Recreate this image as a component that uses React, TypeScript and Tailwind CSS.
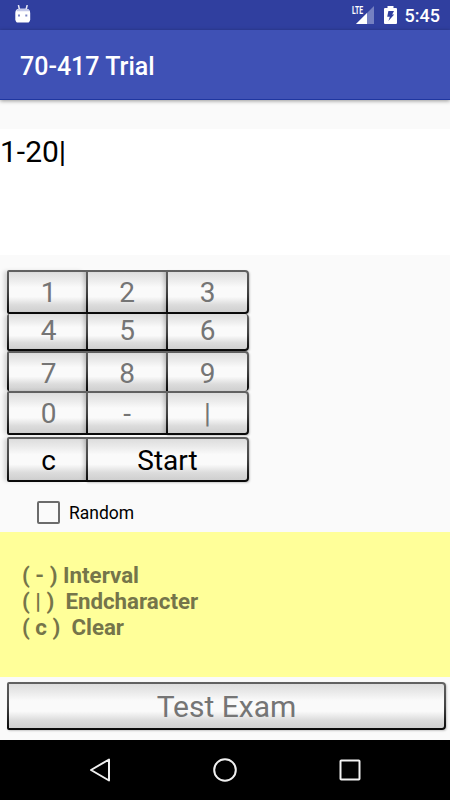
import { useState } from 'react';

type KeyProps = {
  label: string;
  width: string;
  edge?: string;
  face?: string;
  text?: string;
  first?: boolean;
  last?: boolean;
  onClick?: () => void;
};

// Bevelled key: the dark gradient is the frame, the inner span is the face
function Key({ label, width, edge = 'pt-[2px] pb-[2px]', face = '', text = 'text-[#757575] text-[28px]', first, last, onClick }: KeyProps) {
  return (
    <button
      onClick={onClick}
      className={`block h-full shrink-0 pl-[2px] bg-linear-to-b from-[#626262] via-[#444444] to-[#080808] ${edge} ${width} ${first ? 'rounded-l-[2px] shadow-[-4px_0_4px_-1px_rgba(0,0,0,0.15)]' : ''} ${last ? 'pr-[2px] rounded-r-[4px] shadow-[1px_1px_2px_rgba(0,0,0,0.2)]' : ''}`}
    >
      <span
        className={`flex h-full w-full items-center justify-center whitespace-pre leading-none bg-[linear-gradient(to_bottom,#dddddd_0%,#e8e8e8_16%,#fafafa_38%,#fafafa_62%,#dcdcdc_82%,#cfcfcf_100%)] ${text} ${last ? 'rounded-r-[2px]' : 'shadow-[inset_-5px_0_4px_-3px_rgba(0,0,0,0.2)]'}`}
      >
        <span className={face}>{label}</span>
      </span>
    </button>
  );
}

const rows = [
  { keys: ['1', '2', '3'], height: 'h-[44px]', edge: 'pt-[2px] pb-[2px]', face: 'translate-y-[1px]' },
  { keys: ['4', '5', '6'], height: 'h-[37px]', edge: 'pb-[2px]', face: '-translate-y-px' },
  { keys: ['7', '8', '9'], height: 'h-[40px]', edge: 'pt-[2px]', face: 'translate-y-[2px]' },
  { keys: ['0', '-', '|'], height: 'h-[44px]', edge: 'pt-[2px] pb-[2px]', face: 'translate-y-[1px]' },
];

const widths = ['w-[79px]', 'w-[80px]', 'w-[83px]'];

export default function App() {
  const [value, setValue] = useState('1-20|');
  const [random, setRandom] = useState(false);

  return (
    <div className="flex h-[800px] w-[450px] flex-col overflow-hidden bg-[#fafafa] font-['Roboto',sans-serif] text-black">
      {/* Status bar */}
      <div className="flex h-[30px] shrink-0 items-center bg-[#303f9f] pl-[15px] pr-[10px] text-white">
        <svg className="mt-[-3px] h-[18px] w-[16px]" viewBox="0 0 16 18" fill="none">
          <path d="M3.4 0L4.6 5M12.2 0L11 5" stroke="#e8eaf6" strokeWidth="1.5" />
          <path d="M0.3 8Q0.5 3.8 4.5 3.8H11Q15 3.8 15.2 8V14.5Q14.8 17.6 12.6 17.6H2.9Q0.7 17.6 0.3 14.5Z" fill="#fff" />
          <path d="M1.6 5Q2.8 3.8 4.5 3.8H11Q12.8 3.8 14 5V6.2H1.6Z" fill="#c5cae9" />
          <path d="M3 9.5h2v2H3zM10.3 9.5h2v2h-2z" fill="#7c86c4" />
        </svg>
        <svg className="ml-auto h-[20px] w-[24px]" viewBox="0 0 24 20">
          <path d="M24 1V19H6Z" fill="#7580c1" />
          <path d="M17 8V19H6Z" fill="#fff" />
          <text x="2" y="9" fontSize="10.5" fontWeight="700" textLength="11" lengthAdjust="spacingAndGlyphs" fill="#fff">LTE</text>
        </svg>
        <svg className="ml-[10px] h-[18px] w-[13px]" viewBox="0 0 13 18">
          <path d="M3.5 0h6v2H12Q13 2 13 3V17Q13 18 12 18H1Q0 18 0 17V3Q0 2 1 2H3.5Z" fill="#fff" />
          <path d="M4.4 5H10L8.2 8.6H10.2L4.4 15L5.8 10.8H3.2Z" fill="#303f9f" />
        </svg>
        <span className="ml-[8px] pt-px text-[18px] leading-none font-medium">5:45</span>
      </div>

      {/* App bar */}
      <div className="relative flex h-[70px] shrink-0 items-center border-b border-[#1f36a0] bg-[#3f51b5] pl-5 pt-[3px] shadow-[0_1px_4px_rgba(0,0,0,0.4)]">
        <h1 className="text-[25px] leading-none font-medium text-white">70-417 Trial</h1>
      </div>

      {/* Input */}
      <div className="mt-[29px] h-[126px] shrink-0 bg-white pt-[5px] text-[30px] leading-[35px]">{value}</div>

      {/* Keypad */}
      <div className="mt-[15px] ml-[7px] w-[242px] shrink-0">
        {rows.map(row => (
          <div key={row.keys[0]} className={`flex ${row.height}`}>
            {row.keys.map((k, i) => (
              <Key key={k} label={k} width={widths[i]} edge={row.edge} face={i === 0 ? `${row.face} translate-x-px` : row.face} first={i === 0} last={i === 2} onClick={() => setValue(value + k)} />
            ))}
          </div>
        ))}
        <div className="mt-[2px] flex h-[45px]">
          <Key label="c" width="w-[79px]" text="text-black text-[28px]" face="translate-x-px translate-y-[1px]" first onClick={() => setValue('')} />
          <Key label="Start" width="w-[163px]" text="text-black text-[28px]" face="translate-y-[1px]" last />
        </div>
      </div>

      {/* Random */}
      <label className="mt-[18px] ml-[37px] flex h-[24px] shrink-0 items-center">
        <input
          type="checkbox"
          checked={random}
          onChange={e => setRandom(e.target.checked)}
          className="h-[23px] w-[23px] appearance-none rounded-[2px] border-2 border-[#6b6b6b] checked:bg-[#3f51b5]"
        />
        <span className="ml-[9px] pt-[3px] text-[17.5px] leading-none">Random</span>
      </label>

      {/* Legend */}
      <div className="mt-[8px] h-[145px] shrink-0 bg-[#ffff99] pt-[29.5px] pl-[22px] text-[22.3px] leading-[26.2px] font-bold whitespace-pre text-[#75754a]">
        <p>( - ) Interval</p>
        <p>( | )  Endcharacter</p>
        <p>( c )  Clear</p>
      </div>

      <div className="mt-[5px] ml-[7px] h-[48px] shrink-0">
        <Key label="Test Exam" width="w-[439px]" text="text-[#757575] text-[30px]" face="translate-y-[1px]" first last />
      </div>

      {/* Navigation bar */}
      <div className="mt-auto flex h-[60px] shrink-0 items-center justify-center gap-[101px] bg-black">
        <svg className="h-6 w-6" viewBox="0 0 24 24" fill="none" stroke="#f0f0f0" strokeWidth="2" strokeLinejoin="round">
          <path d="M21 1.5V22.5L3 12Z" />
        </svg>
        <svg className="h-6 w-6" viewBox="0 0 24 24" fill="none" stroke="#f0f0f0" strokeWidth="2">
          <circle cx="12" cy="12" r="10.8" />
        </svg>
        <svg className="h-6 w-6" viewBox="0 0 24 24" fill="none" stroke="#f0f0f0" strokeWidth="2">
          <rect x="2.5" y="2.5" width="19" height="19" rx="0.8" />
        </svg>
      </div>
    </div>
  );
}
